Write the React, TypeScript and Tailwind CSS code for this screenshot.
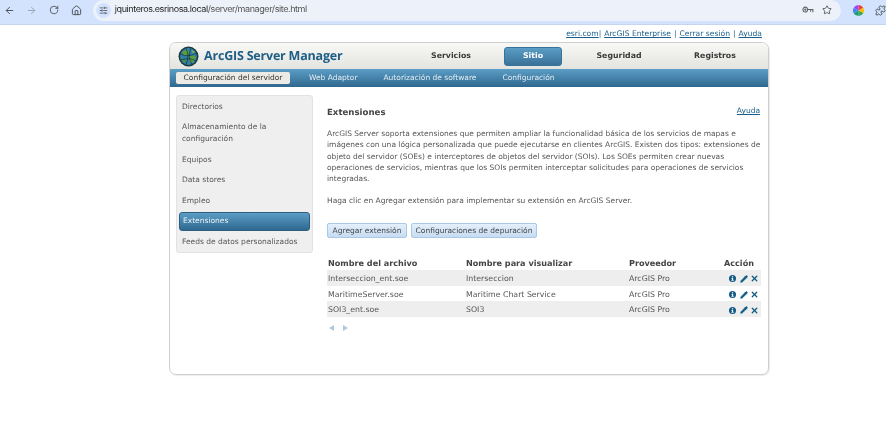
import { ArrowLeft, ArrowRight, RotateCw, House, SlidersHorizontal, Star, Puzzle, Pencil, X } from "lucide-react";

function Globe() {
  return (
    <svg width="21" height="21" viewBox="0 0 21 21" className="shrink-0">
      <circle cx="10.5" cy="10.5" r="10" fill="#1d3a3c" />
      <circle cx="10.5" cy="10.5" r="8.4" fill="#2f7fb0" />
      <path d="M4 6 L9 3.5 L12 6 L9.5 9.5 L6 10 Z" fill="#5c9e3c" />
      <path d="M10 11 L15 9 L18 11 L15.5 16 L12 17 Z" fill="#5c9e3c" />
      <path d="M13 3.5 L17 6 L15 7.5 Z" fill="#7fb347" />
      <path d="M3 12 L7 13 L8 17 L5 16 Z" fill="#4c8c3a" />
      <path d="M2.5 8 Q10 12 18.5 7 M3 14 Q11 11 18 15 M8 2.5 Q12 10 8 18.5 M13 2.5 Q9 10 14 18.5" stroke="#12303a" strokeWidth="0.7" fill="none" />
    </svg>
  );
}

function ColorWheel() {
  return (
    <svg width="11" height="11" viewBox="0 0 12 12">
      <path d="M6 6 L6 0 A6 6 0 0 1 11.2 3 Z" fill="#ea4335" />
      <path d="M6 6 L11.2 3 A6 6 0 0 1 11.2 9 Z" fill="#fbbc04" />
      <path d="M6 6 L11.2 9 A6 6 0 0 1 6 12 Z" fill="#34a853" />
      <path d="M6 6 L6 12 A6 6 0 0 1 0.8 9 Z" fill="#1a9c6c" />
      <path d="M6 6 L0.8 9 A6 6 0 0 1 0.8 3 Z" fill="#4285f4" />
      <path d="M6 6 L0.8 3 A6 6 0 0 1 6 0 Z" fill="#a142f4" />
    </svg>
  );
}

function KeyIcon() {
  return (
    <svg width="12" height="8" viewBox="0 0 13 9" fill="none" stroke="#5f6368" strokeWidth="1.2">
      <circle cx="3.5" cy="4" r="2.7" />
      <circle cx="3.5" cy="4" r="0.7" fill="#5f6368" />
      <path d="M6.2 4 H12 V7 M9.5 4 V6.5" />
    </svg>
  );
}

function InfoDot() {
  return (
    <svg width="7" height="7" viewBox="0 0 14 14">
      <circle cx="7" cy="7" r="7" fill="#0f5a85" />
      <rect x="5.8" y="2.4" width="2.6" height="2.4" fill="#fff" />
      <path d="M4.8 6 H8.4 V10.2 H9.4 V11.6 H4.8 V10.2 H5.8 V7.4 H4.8 Z" fill="#fff" />
    </svg>
  );
}

function ActionIcons() {
  return (
    <div className="flex items-center justify-end pr-[2px]">
      <InfoDot />
      <Pencil size={8} className="ml-[4px] fill-[#0f5a85] text-[#0f5a85]" strokeWidth={2} />
      <X size={9} className="ml-[2px] text-[#0f5a85]" strokeWidth={3.5} />
    </div>
  );
}

const rows = [
  ["Interseccion_ent.soe", "Interseccion"],
  ["MaritimeServer.soe", "Maritime Chart Service"],
  ["SOI3_ent.soe", "SOI3"],
];

const sideItems = [
  "Directorios",
  "Almacenamiento de la configuración",
  "Equipos",
  "Data stores",
  "Empleo",
  "Extensiones",
  "Feeds de datos personalizados",
];

export default function App() {
  return (
    <div className="h-[440px] w-[886px] overflow-hidden bg-white font-['DejaVu_Sans',Verdana,sans-serif] blur-[0.3px] [text-rendering:geometricPrecision]">
      {/* browser bar */}
      <div className="flex h-[25px] items-center border-b border-[#c5d5f0] bg-[#d3e3fd] pb-[4px]">
        <div className="flex w-[93px] items-center pl-[4px] text-[#474a4f]">
          <ArrowLeft size={11} strokeWidth={2} />
          <ArrowRight size={11} strokeWidth={2} className="ml-[11px] text-[#9aa0a8]" />
          <RotateCw size={10} strokeWidth={2} className="ml-[12px]" />
          <House size={11} strokeWidth={2} className="ml-[12px]" />
        </div>
        <div className="flex h-[21px] w-[750px] items-center rounded-full bg-[#edf1f9] pl-[3px] pr-[9px]">
          <span className="flex h-[15px] w-[15px] items-center justify-center rounded-full bg-[#d3e3fd]">
            <SlidersHorizontal size={9} className="text-[#474a4f]" />
          </span>
          <span className="ml-[4px] whitespace-nowrap font-['Inter',sans-serif] text-[9px] tracking-[-0.42px] text-[#555]">
            <span className="text-[#1f1f1f]">jquinteros.esrinosa.local</span>/server/manager/site.html
          </span>
          <div className="ml-auto flex items-center gap-[8px]">
            <KeyIcon />
            <Star size={10} className="text-[#474a4f]" strokeWidth={2} />
          </div>
        </div>
        <div className="ml-[12px]"><ColorWheel /></div>
        <Puzzle size={11} className="ml-[11px] text-[#474a4f]" />
      </div>

      <div className="ml-[169px] w-[600px]">
        {/* top links */}
        <div className="flex h-[17px] items-center justify-end gap-[3px] pr-[7px] pt-[1px] text-[7.6px] text-[#1a5f8b]">
          <span className="underline">esri.com</span><span className="-ml-[3px]">|</span>
          <span className="underline">ArcGIS Enterprise</span><span>|</span>
          <span className="underline">Cerrar sesión</span><span>|</span>
          <span className="underline">Ayuda</span>
        </div>

        {/* card */}
        <div className="h-[333px] overflow-hidden rounded-[7px] border border-[#cfcfcf] shadow-[1px_1px_1px_rgba(0,0,0,0.08)]">
          <div className="flex h-[26px] items-center bg-gradient-to-b from-[#f8f8f6] to-[#e3e3df] pl-[8px]">
            <Globe />
            <span className="ml-[5px] w-[201px] whitespace-nowrap font-['Open_Sans',sans-serif] text-[12.5px] font-bold tracking-[-0.2px] text-[#1f5f86]">ArcGIS Server Manager</span>
            <div className="w-[92px] text-center text-[7.8px] font-bold text-[#3a3a3a]">Servicios</div>
            <div className="ml-[7px] flex h-[19px] w-[58px] items-center justify-center rounded-[3px] border border-[#35739b] bg-gradient-to-b from-[#5b9dc5] to-[#3a7299] text-[7.8px] font-bold text-white">Sitio</div>
            <div className="ml-[15px] w-[84px] text-center text-[7.8px] font-bold text-[#3a3a3a]">Seguridad</div>
            <div className="ml-[11px] w-[86px] text-center text-[7.8px] font-bold text-[#3a3a3a]">Registros</div>
          </div>
          <div className="flex h-[18px] items-center bg-gradient-to-b from-[#5c9ec6] to-[#2f688f] pl-[6px] text-[7.5px] text-[#e4eef4]">
            <div className="flex h-[12px] w-[114px] items-center justify-center rounded-[2px] bg-[#ecebe6] text-[#333]">Configuración del servidor</div>
            <span className="ml-[19px]">Web Adaptor</span>
            <span className="ml-[26px]">Autorización de software</span>
            <span className="ml-[26px]">Configuración</span>
          </div>

          <div className="flex pl-[6px] pt-[8px]">
            {/* sidebar */}
            <div className="h-[158px] w-[137px] rounded-[3px] border border-[#e2e2e2] bg-[#efefef] px-[2px] text-[7.5px] text-[#555]">
              {sideItems.map((s) => (
                <div
                  key={s}
                  className={
                    s === "Extensiones"
                      ? "my-[1px] flex h-[19px] items-center rounded-[3px] border border-[#2f5f80] bg-gradient-to-b from-[#5c9ec6] to-[#2f688f] px-[3px] text-[#eaf2f7]"
                      : s.startsWith("Almacenamiento")
                        ? "flex h-[33px] items-center px-[3px] pt-[1px] leading-[12px]"
                        : s === "Directorios"
                          ? "flex h-[20px] items-center px-[3px] pt-[2px]"
                          : "flex h-[20.5px] items-center px-[3px]"
                  }
                >
                  <span>{s}</span>
                </div>
              ))}
            </div>

            {/* content */}
            <div className="ml-[14px] w-[434px] text-[#555]">
              <div className="flex h-[33px] items-center justify-between pr-[1px] pt-[4px]">
                <span className="text-[8.6px] font-bold text-[#444]">Extensiones</span>
                <span className="mb-[5px] text-[7.5px] text-[#1a5f8b] underline">Ayuda</span>
              </div>
              <p className="text-[7.5px] leading-[11.3px]">
                ArcGIS Server soporta extensiones que permiten ampliar la funcionalidad básica de los servicios de mapas e imágenes con una lógica personalizada que puede ejecutarse en clientes ArcGIS. Existen dos tipos: extensiones de objeto del servidor (SOEs) e interceptores de objetos del servidor (SOIs). Los SOEs permiten crear nuevas operaciones de servicios, mientras que los SOIs permiten interceptar solicitudes para operaciones de servicios integradas.
              </p>
              <p className="mt-[11px] text-[7.5px] leading-[11.3px]">
                Haga clic en Agregar extensión para implementar su extensión en ArcGIS Server.
              </p>
              <div className="mt-[16px] flex gap-[4px] whitespace-nowrap text-[7.5px] text-[#444]">
                <div className="flex h-[15px] w-[80px] items-center justify-center rounded-[2px] border border-[#a9c9e6] bg-gradient-to-b from-[#e4f0fb] to-[#c6dcf2]">Agregar extensión</div>
                <div className="flex h-[15px] w-[126px] items-center justify-center rounded-[2px] border border-[#a9c9e6] bg-gradient-to-b from-[#e4f0fb] to-[#c6dcf2]">Configuraciones de depuración</div>
              </div>

              <div className="mt-[18px] text-[7.8px]">
                <div className="flex h-[14px] items-center text-[8.1px] font-bold text-[#444]">
                  <span className="w-[139px] pl-[1px]">Nombre del archivo</span>
                  <span className="w-[163px]">Nombre para visualizar</span>
                  <span className="w-[88px]">Proveedor</span>
                  <span className="w-[44px] pl-[7px]">Acción</span>
                </div>
                {rows.map((r, i) => (
                  <div key={r[0]} className={`flex items-center pt-[2px] ${i === 0 ? "h-[16px]" : "h-[15.5px]"} ${i % 2 === 0 ? "bg-[#eeeeee]" : "bg-white"}`}>
                    <span className="w-[139px] pl-[1px]">{r[0]}</span>
                    <span className="w-[163px]">{r[1]}</span>
                    <span className="w-[88px]">ArcGIS Pro</span>
                    <div className="w-[44px]"><ActionIcons /></div>
                  </div>
                ))}
              </div>
              <div className="mt-[8px] flex items-center gap-[9px] pl-[2px]">
                <span className="h-0 w-0 border-y-[3px] border-r-[5px] border-y-transparent border-r-[#a9c9e6]" />
                <span className="h-0 w-0 border-y-[3px] border-l-[5px] border-y-transparent border-l-[#a9c9e6]" />
              </div>
            </div>
          </div>
        </div>
      </div>
    </div>
  );
}
